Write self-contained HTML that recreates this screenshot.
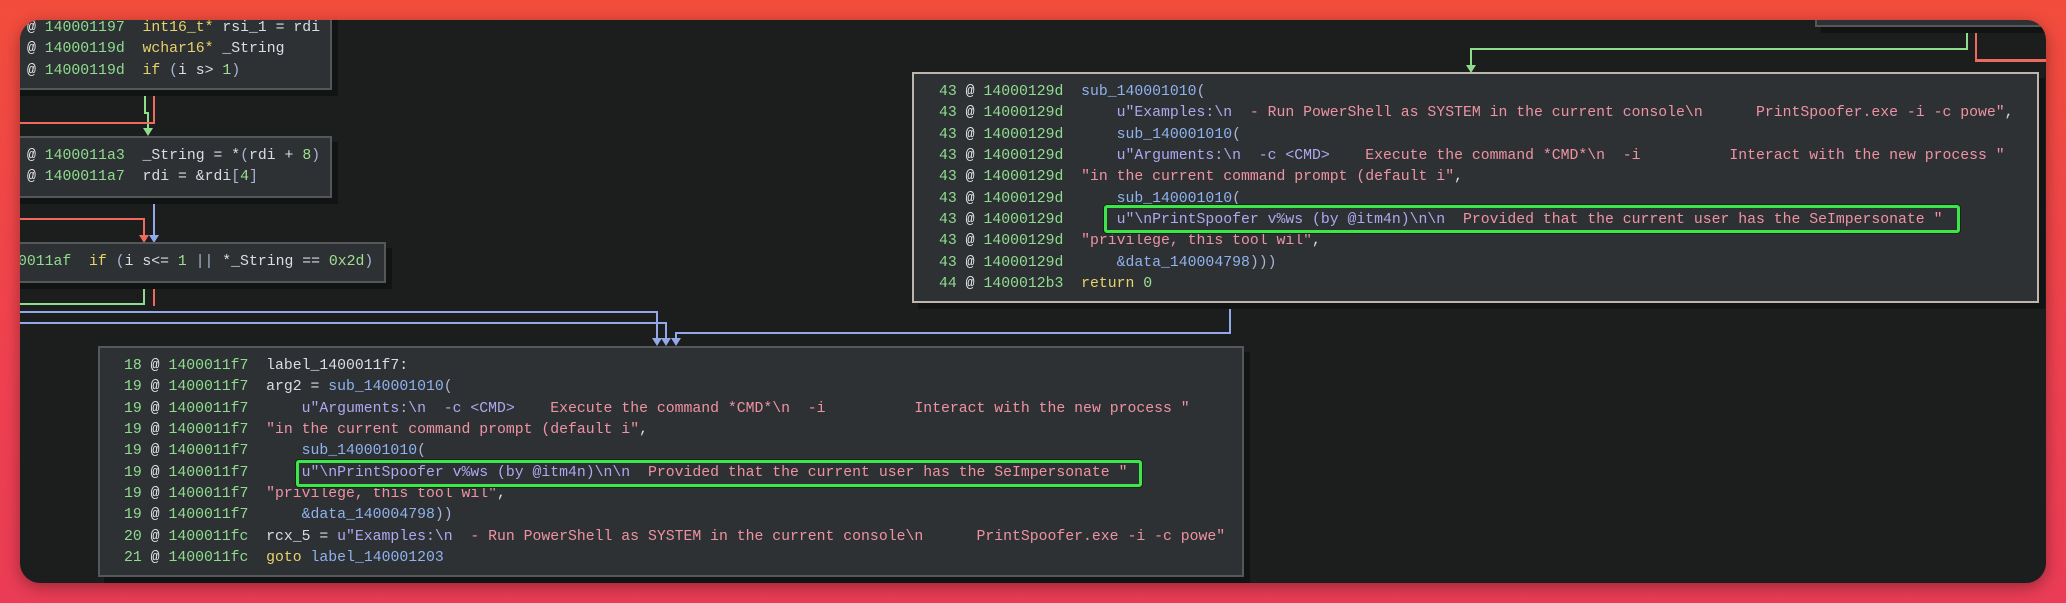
<!DOCTYPE html>
<html><head><meta charset="utf-8"><style>
*{margin:0;padding:0;box-sizing:border-box}
body{width:2066px;height:603px;overflow:hidden;background:linear-gradient(180deg,#f24d3c 0%,#ef4150 60%,#ea3c55 100%);position:relative;font-family:"Liberation Mono",monospace}
#win{position:absolute;left:20px;top:20px;width:2026px;height:563px;background:#1c1e1e;border-radius:20px;overflow:hidden;box-shadow:0 4px 16px rgba(0,0,0,.35)}
.box{position:absolute;background:#2e3133;border:2px solid #55585a;box-shadow:6px 6px 0 #121313}
.box.w{border-color:#bdb6ad}
.t{position:absolute;font-size:14.8px;line-height:21.33px;white-space:pre;color:#d9dde6;letter-spacing:0}
.n{color:#8fdc8f}.a{color:#e8e8e8}.k{color:#e8d26a}.f{color:#8fb2ee}.s{color:#ee93a3}.u{color:#b2a6f0}.num{color:#9fe08f}.p{color:#a9b4d8}
.h{position:absolute;border:3px solid #3fe64b;border-radius:3px;box-shadow:0 0 0 1px #0c2a10}
.l{position:absolute}
</style></head><body>
<div id="win">
<!-- edges (window coords = page - 20) -->
<div class="l" style="left:124px;top:70px;width:2px;height:23px;background:#8fdc8f"></div>
<div class="l" style="left:124px;top:92px;width:5px;height:2px;background:#8fdc8f"></div>
<div class="l" style="left:127px;top:92px;width:2px;height:20px;background:#8fdc8f"></div>
<div class="l" style="left:133px;top:70px;width:2px;height:34px;background:#ef6a5e"></div>
<div class="l" style="left:0;top:102px;width:135px;height:2px;background:#ef6a5e"></div>
<div class="l" style="left:133px;top:177px;width:2px;height:44px;background:#93a8e8"></div>
<div class="l" style="left:0;top:198px;width:124px;height:2px;background:#ef6a5e"></div>
<div class="l" style="left:123px;top:198px;width:2px;height:23px;background:#ef6a5e"></div>
<div class="l" style="left:123px;top:262px;width:2px;height:22px;background:#8fdc8f"></div>
<div class="l" style="left:0;top:283px;width:125px;height:2px;background:#8fdc8f"></div>
<div class="l" style="left:133px;top:262px;width:2px;height:24px;background:#ef6a5e"></div>
<div class="l" style="left:0;top:291px;width:637px;height:2px;background:#93a8e8"></div>
<div class="l" style="left:636px;top:291px;width:2px;height:32px;background:#93a8e8"></div>
<div class="l" style="left:0;top:302px;width:646px;height:2px;background:#93a8e8"></div>
<div class="l" style="left:645px;top:302px;width:2px;height:21px;background:#93a8e8"></div>
<div class="l" style="left:655px;top:312px;width:555px;height:2px;background:#93a8e8"></div>
<div class="l" style="left:655px;top:312px;width:2px;height:11px;background:#93a8e8"></div>
<div class="l" style="left:1209px;top:282px;width:2px;height:32px;background:#93a8e8"></div>
<div class="l" style="left:660px;top:556px;width:2px;height:10px;background:#93a8e8"></div>
<div class="l" style="left:1946px;top:6px;width:2px;height:23px;background:#8fdc8f"></div>
<div class="l" style="left:1451px;top:28px;width:497px;height:2px;background:#8fdc8f"></div>
<div class="l" style="left:1450px;top:28px;width:2px;height:22px;background:#8fdc8f"></div>
<div class="l" style="left:1955px;top:6px;width:2px;height:35px;background:#ef6a5e"></div>
<div class="l" style="left:1955px;top:39px;width:80px;height:3px;background:#ef6a5e"></div>
<!-- arrowheads -->
<svg class="l" style="left:0;top:0" width="2026" height="563">
<g fill="#8fdc8f"><polygon points="123,108 133,108 128,116"/><polygon points="1446,45 1456,45 1451,53"/></g>
<g fill="#ef6a5e"><polygon points="119,215 129,215 124,223"/></g>
<g fill="#93a8e8"><polygon points="129,215 139,215 134,223"/><polygon points="632,318 642,318 637,326"/><polygon points="641,318 651,318 646,326"/><polygon points="651,318 661,318 656,326"/></g>
</svg>
<!-- boxes -->
<div class="box" style="left:-10px;top:-10px;width:322px;height:80px"></div>
<div class="box" style="left:-10px;top:116px;width:322px;height:62px"></div>
<div class="box" style="left:-10px;top:222px;width:376px;height:41px"></div>
<div class="box" style="left:1795px;top:-10px;width:250px;height:17px"></div>
<div class="box w" style="left:892px;top:52px;width:1127px;height:231px"></div>
<div class="box" style="left:78px;top:326px;width:1146px;height:231px"></div>
<div class="t" style="left:7px;top:-2px"><span class="a">@</span> <span class="n">140001197</span>  <span class="k">int16_t*</span> rsi_1 = rdi
<span class="a">@</span> <span class="n">14000119d</span>  <span class="k">wchar16*</span> _String
<span class="a">@</span> <span class="n">14000119d</span>  <span class="k">if</span> <span class="p">(</span>i s&gt; <span class="num">1</span><span class="p">)</span></div>
<div class="t" style="left:7px;top:126px"><span class="a">@</span> <span class="n">1400011a3</span>  _String = *<span class="p">(</span>rdi + <span class="num">8</span><span class="p">)</span>
<span class="a">@</span> <span class="n">1400011a7</span>  rdi = &amp;rdi<span class="p">[</span><span class="num">4</span><span class="p">]</span></div>
<div class="t" style="left:-2px;top:232px"><span class="n">0011af</span>  <span class="k">if</span> <span class="p">(</span>i s&lt;= <span class="num">1</span> <span class="p">||</span> *_String == <span class="num">0x2d</span><span class="p">)</span></div>
<div class="t" style="left:919px;top:62px"><span class="n">43</span> <span class="a">@</span> <span class="n">14000129d</span>  <span class="f">sub_140001010</span><span class="p">(</span>
<span class="n">43</span> <span class="a">@</span> <span class="n">14000129d</span>      <span class="u">u"Examples:\n</span><span class="s">  - Run PowerShell as SYSTEM in the current console\n      PrintSpoofer.exe -i -c powe"</span>,
<span class="n">43</span> <span class="a">@</span> <span class="n">14000129d</span>      <span class="f">sub_140001010</span><span class="p">(</span>
<span class="n">43</span> <span class="a">@</span> <span class="n">14000129d</span>      <span class="u">u"Arguments:\n  -c &lt;CMD&gt;</span><span class="s">    Execute the command *CMD*\n  -i          Interact with the new process "</span>
<span class="n">43</span> <span class="a">@</span> <span class="n">14000129d</span>  <span class="s">"in the current command prompt (default i"</span>,
<span class="n">43</span> <span class="a">@</span> <span class="n">14000129d</span>      <span class="f">sub_140001010</span><span class="p">(</span>
<span class="n">43</span> <span class="a">@</span> <span class="n">14000129d</span>      <span class="u">u"\nPrintSpoofer v%ws (by @itm4n)\n\n</span><span class="s">  Provided that the current user has the SeImpersonate "</span>
<span class="n">43</span> <span class="a">@</span> <span class="n">14000129d</span>  <span class="s">"privilege, this tool wil"</span>,
<span class="n">43</span> <span class="a">@</span> <span class="n">14000129d</span>      <span class="f">&amp;data_140004798</span><span class="p">)))</span>
<span class="n">44</span> <span class="a">@</span> <span class="n">1400012b3</span>  <span class="k">return</span> <span class="num">0</span></div>
<div class="t" style="left:104px;top:336px"><span class="n">18</span> <span class="a">@</span> <span class="n">1400011f7</span>  label_1400011f7:
<span class="n">19</span> <span class="a">@</span> <span class="n">1400011f7</span>  arg2 = <span class="f">sub_140001010</span><span class="p">(</span>
<span class="n">19</span> <span class="a">@</span> <span class="n">1400011f7</span>      <span class="u">u"Arguments:\n  -c &lt;CMD&gt;</span><span class="s">    Execute the command *CMD*\n  -i          Interact with the new process "</span>
<span class="n">19</span> <span class="a">@</span> <span class="n">1400011f7</span>  <span class="s">"in the current command prompt (default i"</span>,
<span class="n">19</span> <span class="a">@</span> <span class="n">1400011f7</span>      <span class="f">sub_140001010</span><span class="p">(</span>
<span class="n">19</span> <span class="a">@</span> <span class="n">1400011f7</span>      <span class="u">u"\nPrintSpoofer v%ws (by @itm4n)\n\n</span><span class="s">  Provided that the current user has the SeImpersonate "</span>
<span class="n">19</span> <span class="a">@</span> <span class="n">1400011f7</span>  <span class="s">"privilege, this tool wil"</span>,
<span class="n">19</span> <span class="a">@</span> <span class="n">1400011f7</span>      <span class="f">&amp;data_140004798</span><span class="p">))</span>
<span class="n">20</span> <span class="a">@</span> <span class="n">1400011fc</span>  rcx_5 = <span class="u">u"Examples:\n</span><span class="s">  - Run PowerShell as SYSTEM in the current console\n      PrintSpoofer.exe -i -c powe"</span>
<span class="n">21</span> <span class="a">@</span> <span class="n">1400011fc</span>  <span class="k">goto</span> <span class="f">label_140001203</span></div>
<div class="h" style="left:1084px;top:185px;width:856px;height:28px"></div>
<div class="h" style="left:276px;top:440px;width:846px;height:27px"></div>
</div>
</body></html>
